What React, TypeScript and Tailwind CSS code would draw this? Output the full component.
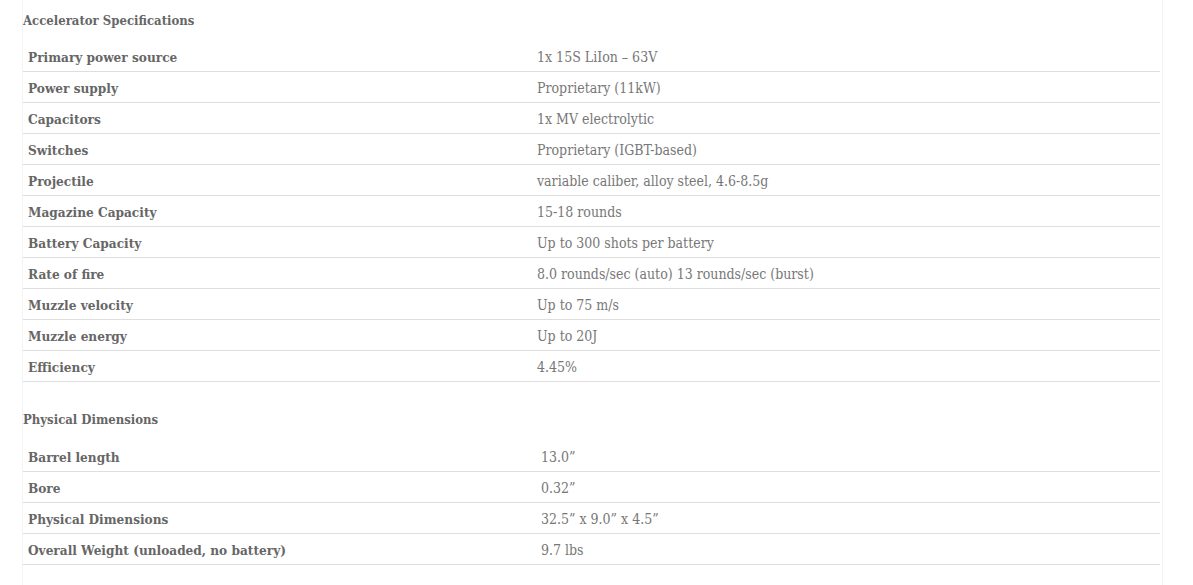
import React from "react";

const spec1: [string, string][] = [
  ["Primary power source", "1x 15S LiIon – 63V"],
  ["Power supply", "Proprietary (11kW)"],
  ["Capacitors", "1x MV electrolytic"],
  ["Switches", "Proprietary (IGBT-based)"],
  ["Projectile", "variable caliber, alloy steel, 4.6-8.5g"],
  ["Magazine Capacity", "15-18 rounds"],
  ["Battery Capacity", "Up to 300 shots per battery"],
  ["Rate of fire", "8.0 rounds/sec (auto) 13 rounds/sec (burst)"],
  ["Muzzle velocity", "Up to 75 m/s"],
  ["Muzzle energy", "Up to 20J"],
  ["Efficiency", "4.45%"],
];

const spec2: [string, string][] = [
  ["Barrel length", "13.0”"],
  ["Bore", "0.32”"],
  ["Physical Dimensions", "32.5” x 9.0” x 4.5”"],
  ["Overall Weight (unloaded, no battery)", "9.7 lbs"],
];

function Table({ rows, labelW }: { rows: [string, string][]; labelW: string }) {
  return (
    <div className="mr-[2px]">
      {rows.map(([k, v]) => (
        <div key={k} className="flex h-[31px] items-center border-b border-[#dedede] pt-[3px]">
          <div className={`${labelW} shrink-0 pl-[5px] text-[13.5px] font-bold text-[#666]`}>{k}</div>
          <div className="pl-[5px] text-[#777]">{v}</div>
        </div>
      ))}
    </div>
  );
}

export default function App() {
  return (
    <div
      className="min-h-[585px] bg-white text-[14px]"
      style={{ fontFamily: '"DejaVu Serif Condensed", "DejaVu Serif", serif' }}
    >
      <div className="ml-[22px] w-[1141px] min-h-[585px] border-x border-[#f4f4f4]">
        <div className="flex h-[41px] items-center text-[13px] font-bold text-[#666]">Accelerator Specifications</div>
        <Table rows={spec1} labelW="w-[509px]" />
        <div className="flex h-[59px] items-center pt-[16px] text-[13px] font-bold text-[#666]">Physical Dimensions</div>
        <Table rows={spec2} labelW="w-[513px]" />
      </div>
    </div>
  );
}
